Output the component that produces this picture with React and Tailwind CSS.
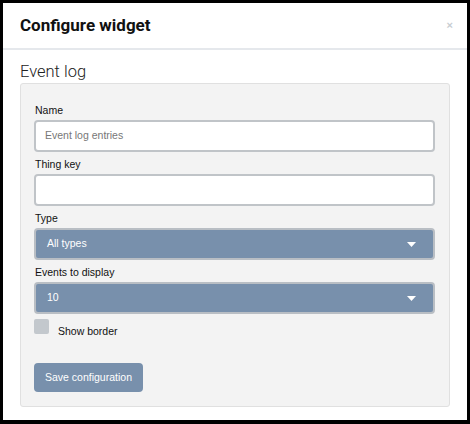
import React from 'react';

const Field = ({ label, children }) => (
  <div className="mb-[5px]">
    <label className="block pl-[1px] text-[10.5px] leading-[15px] text-[#111] mb-[2px]">{label}</label>
    {children}
  </div>
);

const Select = ({ value }) => (
  <div className="relative h-[32px] rounded-[4px] border-2 border-[#b9bec4] bg-[#7890ac] flex items-center pl-[11px] pr-[10px]">
    <span className="flex-1 text-[10.5px] text-white">{value}</span>
    <svg width="9" height="5" viewBox="0 0 9 5" className="mr-[7px]">
      <path d="M0 0 H9 L4.5 5 Z" fill="#fff" />
    </svg>
  </div>
);

const App = () => {
  return (
    <div className="w-[470px] h-[424px] bg-black pt-[3px] pb-[4px] px-[3px]" style={{ fontFamily: '"Liberation Sans", Arial, sans-serif' }}>
      <div className="h-full bg-white">
        <div className="h-[45px] flex items-center justify-between pl-[17px] pr-[14px] border-b-2 border-[#e5e8ec] box-content">
          <h1 className="text-[17px] leading-[19px] font-bold text-[#111]" style={{ fontFamily: 'Roboto, sans-serif' }}>
            Configure widget
          </h1>
          <span className="text-[11px] font-bold text-[#c8cdd2] leading-none">×</span>
        </div>

        <div className="px-[17px]">
          <h2 className="mt-[12px] mb-[2px] text-[16.5px] leading-[19px] font-light text-[#222]" style={{ fontFamily: 'Roboto, sans-serif' }}>
            Event log
          </h2>

          <div className="w-[430px] border border-[#e0e0e0] rounded-[3px] bg-[#f3f3f3] pt-[19px] pb-[14px] pl-[13px] pr-[14px]">
            <Field label="Name">
              <div className="h-[32px] rounded-[4px] border-2 border-[#c0c4c8] bg-white flex items-center pl-[9px]">
                <span className="text-[10.5px] text-[#777]">Event log entries</span>
              </div>
            </Field>
            <Field label="Thing key">
              <div className="h-[32px] rounded-[4px] border-2 border-[#c0c4c8] bg-white" />
            </Field>
            <Field label="Type">
              <Select value="All types" />
            </Field>
            <Field label="Events to display">
              <Select value="10" />
            </Field>

            <div className="flex items-start mt-[1px] h-[15px]">
              <div className="w-[15px] h-[15px] rounded-[2px] bg-[#c3c8cd]" />
              <span className="ml-[9px] mt-[5px] text-[10.5px] leading-[15px] text-[#111]">Show border</span>
            </div>

            <button className="block mt-[29px] w-[109px] h-[29px] rounded-[4px] bg-[#7890ac] text-white text-[10.5px]">
              Save configuration
            </button>
          </div>
        </div>
      </div>
    </div>
  );
};

export default App;
